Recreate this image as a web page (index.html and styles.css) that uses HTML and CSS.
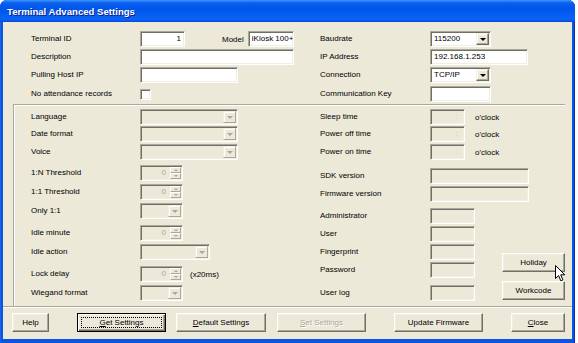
FILE: index.html
```html
<!DOCTYPE html>
<html lang="en">
<head>
  <meta charset="UTF-8">
  <meta name="viewport" content="width=device-width, initial-scale=1.0">
  <title>Terminal Advanced Settings</title>
  <link rel="stylesheet" href="styles.css">
</head>
<body>
  <div class="window">
    <div class="titlebar">Terminal Advanced Settings</div>
    <div class="client">
      <!-- connection settings -->
      <div class="top">
        <label>Terminal ID</label>
        <div class="cell">
          <span class="edit num w45">1</span>
          <span class="model-lbl">Model</span>
          <span class="edit w46">iKiosk 100+</span>
        </div>
        <label>Baudrate</label>
        <div class="cell"><span class="combo w61"><span class="val">115200</span><span class="arrow"></span></span></div>

        <label>Description</label>
        <div class="cell"><span class="edit w154"></span></div>
        <label>IP Address</label>
        <div class="cell"><span class="edit w98">192.168.1.253</span></div>

        <label>Pulling Host IP</label>
        <div class="cell"><span class="edit w98"></span></div>
        <label>Connection</label>
        <div class="cell"><span class="combo w61"><span class="val">TCP/IP</span><span class="arrow"></span></span></div>

        <label>No attendance records</label>
        <div class="cell"><span class="check"></span></div>
        <label>Communication Key</label>
        <div class="cell"><span class="edit w61"></span></div>
      </div>

      <!-- device settings -->
      <div class="group">
        <div class="col left-col">
          <label>Language</label>
          <span class="combo off w98"><span class="val"></span><span class="arrow"></span></span>
          <label>Date format</label>
          <span class="combo off w98"><span class="val"></span><span class="arrow"></span></span>
          <label>Voice</label>
          <span class="combo off w98"><span class="val"></span><span class="arrow"></span></span>
          <label>1:N Threshold</label>
          <span class="spin w43"><span class="val">0</span><span class="ud"><i class="up"></i><i class="dn"></i></span></span>
          <label>1:1 Threshold</label>
          <span class="spin w43"><span class="val">0</span><span class="ud"><i class="up"></i><i class="dn"></i></span></span>
          <label>Only 1:1</label>
          <span class="combo off w43"><span class="val"></span><span class="arrow"></span></span>
          <label>Idle minute</label>
          <span class="spin w43"><span class="val">0</span><span class="ud"><i class="up"></i><i class="dn"></i></span></span>
          <label>Idle action</label>
          <span class="combo off w70"><span class="val"></span><span class="arrow"></span></span>
          <label>Lock delay</label>
          <div class="cell">
            <span class="spin w43"><span class="val">0</span><span class="ud"><i class="up"></i><i class="dn"></i></span></span>
            <span class="unit">(x20ms)</span>
          </div>
          <label>Wiegand format</label>
          <span class="combo off w43"><span class="val"></span><span class="arrow"></span></span>
        </div>

        <div class="col right-col">
          <label>Sleep time</label>
          <div class="cell"><span class="edit off time w35">:</span><span class="unit2">o'clock</span></div>
          <label>Power off time</label>
          <div class="cell"><span class="edit off time w35">:</span><span class="unit2">o'clock</span></div>
          <label>Power on time</label>
          <div class="cell"><span class="edit off time w35">:</span><span class="unit2">o'clock</span></div>
          <label>SDK version</label>
          <span class="edit off w99"></span>
          <label>Firmware version</label>
          <span class="edit off w99"></span>
          <label>Administrator</label>
          <span class="edit off w45"></span>
          <label>User</label>
          <span class="edit off w45"></span>
          <label>Fingerprint</label>
          <span class="edit off w45"></span>
          <label>Password</label>
          <span class="edit off w45"></span>
          <label>User log</label>
          <span class="edit off w45"></span>
        </div>

        <div class="side-btns">
          <button class="btn">Holiday</button>
          <button class="btn">Workcode</button>
        </div>
      </div>

      <!-- dialog buttons -->
      <div class="footer">
        <button class="btn w37">Help</button>
        <button class="btn default w89 far"><u>G</u>et Settings</button>
        <button class="btn w90"><u>D</u>efault Settings</button>
        <button class="btn disabled w89 near"><u>S</u>et Settings</button>
        <button class="btn w89 far">Update Firmware</button>
        <button class="btn w54 far"><u>C</u>lose</button>
      </div>
    </div>

    <svg class="cursor" width="12" height="18" viewBox="0 0 12 18">
      <path d="M0.5 0.5 L0.5 13.5 L3.6 10.6 L5.8 15.8 L7.9 14.9 L5.7 9.8 L9.8 9.8 Z" fill="#fff" stroke="#000" stroke-width="1" stroke-linejoin="miter"/>
    </svg>
  </div>
</body>
</html>
```

FILE: styles.css
```css
body {
  margin: 0;
  background-color: #fff;
  font-family: "Liberation Sans", Arial, sans-serif;
  font-size: 8px;
  color: #000;
}
.window {
  position: relative;
  width: 575px;
  height: 343px;
  display: flex;
  flex-direction: column;
  background-color: #0b55e0;
  border-radius: 7px 7px 0 0;
  box-shadow: inset -1px 0 #0a2fb0, inset 1px 0 #1c62e6;
}
.titlebar {
  height: 22px;
  line-height: 23px;
  padding-left: 7px;
  color: #fff;
  font-weight: bold;
  font-size: 9.6px;
  text-shadow: 1px 1px #0a1c8c;
  border-radius: 7px 7px 0 0;
  background: linear-gradient(180deg, #3d95ff 0, #0a5ff0 3px, #0055ea 40%, #0a63f6 85%, #0a5cf0 92%, #0544d2 100%);
}
.client {
  flex: 1;
  margin: 0 3px 4px 3px;
  background-color: #ece9d8;
  display: flex;
  flex-direction: column;
}
label {
  height: 16px;
  line-height: 16px;
  white-space: nowrap;
}
.cell {
  display: flex;
  align-items: center;
  height: 16px;
}
.top {
  display: grid;
  grid-template-columns: 109px 180px 110px 1fr;
  grid-template-rows: 18px 18px 19px 16px;
  align-items: start;
  padding: 9px 0 0 28px;
}
.model-lbl {
  margin-left: 37px;
}
.model-lbl + .edit {
  margin-left: 4px;
}

/* controls */
.edit, .combo, .spin {
  box-sizing: border-box;
  height: 16px;
  border: 1px solid;
  border-color: #aca899 #fff #fff #aca899;
  box-shadow: inset 1px 1px #716f64, inset -1px -1px #f1efe2;
  background-color: #fff;
  line-height: 14px;
  padding: 0 3px;
  overflow: hidden;
  white-space: nowrap;
}
.edit.num {
  text-align: right;
}
.edit.off, .combo.off, .spin {
  background-color: #ece9d8;
}
.edit.time {
  color: #c9c5b4;
  text-align: right;
  padding-right: 6px;
}
.combo, .spin {
  display: flex;
  padding: 1px;
}
.combo .val {
  flex: 1;
  padding-left: 2px;
  line-height: 12px;
}
.combo .arrow {
  width: 11px;
  border: 1px solid;
  border-color: #f1efe2 #716f64 #716f64 #f1efe2;
  box-shadow: inset -1px -1px #aca899, inset 1px 1px #fff;
  background-color: #ece9d8;
  display: flex;
  align-items: center;
  justify-content: center;
}
.combo .arrow::after {
  content: "";
  border-left: 3px solid transparent;
  border-right: 3px solid transparent;
  border-top: 3px solid #000;
}
.combo.off .arrow {
  border-color: #f1efe2 #aca899 #aca899 #f1efe2;
  box-shadow: inset 1px 1px #fff;
}
.combo.off .arrow::after {
  border-top-color: #aca899;
}
.spin .val {
  flex: 1;
  text-align: right;
  color: #aca899;
  padding-right: 4px;
  line-height: 12px;
}
.spin .ud {
  width: 11px;
  display: flex;
  flex-direction: column;
}
.spin .ud i {
  flex: 1;
  display: flex;
  align-items: center;
  justify-content: center;
  border: 1px solid;
  border-color: #fff #aca899 #aca899 #fff;
}
.spin .ud i::after {
  content: "";
  border-left: 2px solid transparent;
  border-right: 2px solid transparent;
}
.spin .ud .up::after {
  border-bottom: 2px solid #aca899;
}
.spin .ud .dn::after {
  border-top: 2px solid #aca899;
}
.check {
  box-sizing: border-box;
  width: 11px;
  height: 11px;
  margin-top: 1px;
  border: 1px solid;
  border-color: #aca899 #fff #fff #aca899;
  box-shadow: inset 1px 1px #716f64, inset -1px -1px #f1efe2;
  background-color: #fff;
}
.w35 { width: 35px; }
.w43 { width: 43px; }
.w45 { width: 45px; }
.w46 { width: 46px; }
.w61 { width: 61px; }
.w70 { width: 70px; }
.w98 { width: 98px; }
.w99 { width: 99px; }
.w154 { width: 154px; }
.w37 { width: 37px; }
.w54 { width: 54px; }
.w89 { width: 89px; }
.w90 { width: 90px; }

/* group */
.group {
  display: flex;
  margin: 2px 7px 0 10px;
  padding: 4px 0 5px 17px;
  border-top: 1px solid #aca899;
  border-left: 1px solid #aca899;
  box-shadow: inset 1px 1px #fff;
}
.col {
  display: grid;
  align-items: start;
}
.left-col {
  width: 289px;
  grid-template-columns: 109px 1fr;
  grid-template-rows: 17px 18px 21px 19px 19px 22px 19px 22px 19px 16px;
}
.right-col {
  width: 182px;
  grid-template-columns: 110px 1fr;
  grid-template-rows: 17px 18px 24px 18px 22px 18px 18px 18px 23px 16px;
}
.unit {
  margin-left: 7px;
}
.unit2 {
  margin-left: 10px;
}
.side-btns {
  width: 63px;
  display: flex;
  flex-direction: column;
  justify-content: flex-end;
  gap: 9px;
  padding-bottom: 1px;
}

/* buttons */
.btn {
  position: relative;
  box-sizing: border-box;
  height: 19px;
  padding: 0;
  font-family: inherit;
  font-size: 8px;
  color: #000;
  background-color: #ece9d8;
  border: 1px solid;
  border-color: #fff #716f64 #716f64 #fff;
  box-shadow: inset -1px -1px #aca899, inset 1px 1px #f1efe2;
}
.btn.default {
  border-color: #000;
  box-shadow: inset 1px 1px #fff, inset -1px -1px #716f64, inset -2px -2px #aca899;
}
.btn.default::after {
  content: "";
  position: absolute;
  inset: 3px;
  border: 1px dotted #000;
}
.btn.disabled {
  color: #aca899;
  text-shadow: 1px 1px #fff;
}
.footer {
  display: flex;
  gap: 10px;
  padding: 6px 0 0 9px;
  border-top: 1px solid #aca899;
  box-shadow: inset 0 1px #fff;
  flex: 1;
}
.footer .far {
  margin-left: 18px;
}
.footer .near {
  margin-left: 1px;
}
.cursor {
  position: absolute;
  left: 555px;
  top: 265px;
}
```
